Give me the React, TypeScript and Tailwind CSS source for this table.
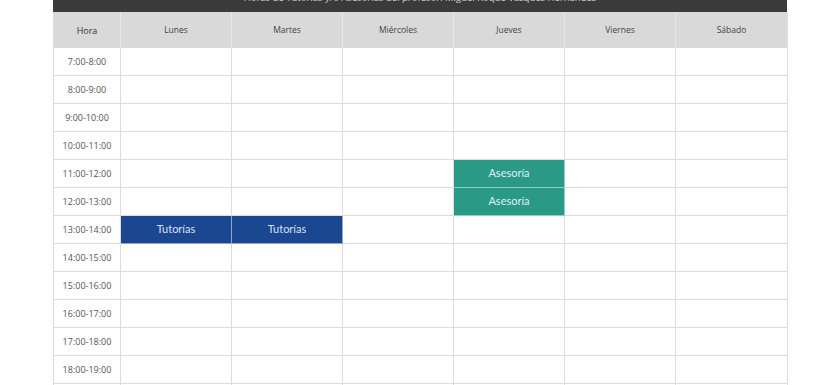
import React from "react";

const days = ["Lunes", "Martes", "Miércoles", "Jueves", "Viernes", "Sábado"];
const hours = [
  "7:00-8:00",
  "8:00-9:00",
  "9:00-10:00",
  "10:00-11:00",
  "11:00-12:00",
  "12:00-13:00",
  "13:00-14:00",
  "14:00-15:00",
  "15:00-16:00",
  "16:00-17:00",
  "17:00-18:00",
  "18:00-19:00",
  "19:00-20:00",
];

type Cell = { label: string; kind: "teal" | "blue" } | null;

function cellFor(h: number, d: number): Cell {
  if (d === 3 && (h === 4 || h === 5)) return { label: "Asesoría", kind: "teal" };
  if ((d === 0 || d === 1) && h === 6) return { label: "Tutorías", kind: "blue" };
  return null;
}

export default function App() {
  return (
    <div className="w-[840px] h-[385px] overflow-hidden bg-white">
      <div className="w-[734px] mx-auto -mt-[18px] font-['Open_Sans',sans-serif]">
        <div className="h-[30px] bg-[#3a3a3a] flex items-end justify-center pb-[9px]">
          <span className="text-[9.5px] leading-[10px] text-[#cfcfcf]">
            Horas de Tutorías y/o Asesorías del profesor: Miguel Roque Vázquez Hernández
          </span>
        </div>
        <div className="grid grid-cols-[67px_111px_111px_111px_111px_111px_112px] border-l border-[#dcdcdc]">
          <div className="h-[36px] pt-[1px] bg-[#d9d9d9] flex items-center justify-center text-[9px] text-[#333] border-r border-[#e6e6e6]">
            Hora
          </div>
          {days.map((d, i) => (
            <div
              key={d}
              className={
                i === 5
                  ? "h-[36px] pt-[1px] bg-[#d9d9d9] flex items-center justify-center text-[8.5px] text-[#444] border-r border-[#e0e0e0]"
                  : "h-[36px] pt-[1px] bg-[#d9d9d9] flex items-center justify-center text-[8.5px] text-[#444] border-r border-[#e6e6e6]"
              }
            >
              {d}
            </div>
          ))}
          {hours.map((h, hi) => (
            <React.Fragment key={h}>
              <div className="h-[28px] flex items-center justify-center text-[9px] text-[#555] border-r border-b border-[#dcdcdc]">
                {h}
              </div>
              {days.map((d, di) => {
                const c = cellFor(hi, di);
                if (c && c.kind === "teal")
                  return (
                    <div
                      key={d}
                      className="h-[28px] bg-[#2a9a86] flex items-center justify-center text-[11px] text-[#dff3ee] font-['Lato',sans-serif] border-r border-b border-[#8fcfc2]"
                    >
                      {c.label}
                    </div>
                  );
                if (c && c.kind === "blue")
                  return (
                    <div
                      key={d}
                      className="h-[28px] bg-[#1b4790] flex items-center justify-center text-[11px] text-[#d6e2f5] font-['Lato',sans-serif] border-r border-b border-[#8ea6cf]"
                    >
                      {c.label}
                    </div>
                  );
                return (
                  <div key={d} className="h-[28px] border-r border-b border-[#dcdcdc]" />
                );
              })}
            </React.Fragment>
          ))}
        </div>
      </div>
    </div>
  );
}
